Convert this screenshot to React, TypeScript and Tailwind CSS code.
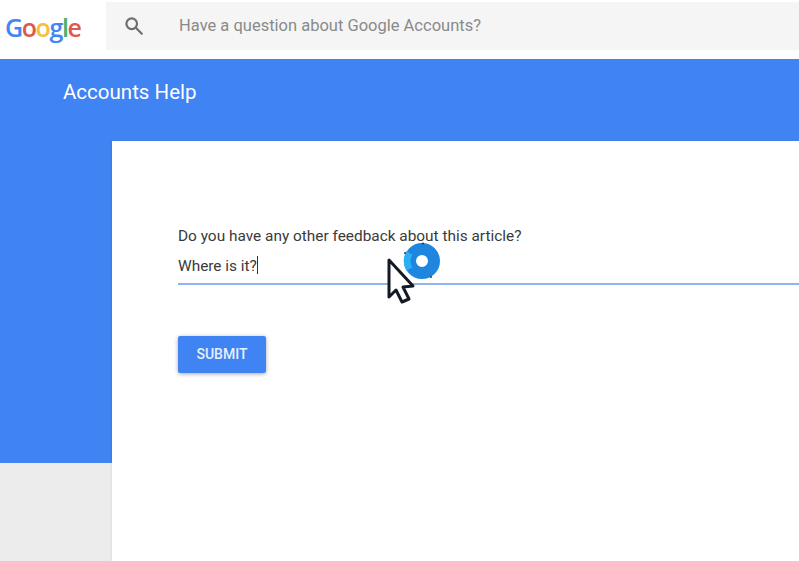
export default function App() {
  return (
    <div className="relative flex h-[561px] w-[799px] flex-col overflow-hidden bg-white font-['Roboto',sans-serif]">
      <header className="flex h-[59px] shrink-0 items-start bg-white">
        <div className="flex h-[54px] w-[106px] items-center pl-[5px] font-['Open_Sans',sans-serif] text-[25px] font-semibold leading-none tracking-[-1.4px]">
          <span className="text-[#4285f4]">G</span>
          <span className="text-[#e0584d]">o</span>
          <span className="text-[#f2c13c]">o</span>
          <span className="text-[#4285f4]">g</span>
          <span className="text-[#4caf6a]">l</span>
          <span className="text-[#e0584d]">e</span>
        </div>
        <div className="mt-[2px] flex h-[48px] flex-1 items-center bg-[#f5f5f5] pl-[17px]">
          <svg viewBox="0 0 24 24" className="h-[22px] w-[22px] text-[#6e6e6e]" fill="none" stroke="currentColor" strokeWidth="2.4">
            <circle cx="9.5" cy="9.5" r="5.8" />
            <path d="M14 14l6.5 6.5" strokeLinecap="round" />
          </svg>
          <span className="ml-[34px] text-[16.5px] text-[#8a8a8a]">Have a question about Google Accounts?</span>
        </div>
      </header>

      <div className="flex h-[82px] shrink-0 items-start bg-[#4083f2] pl-[63px] pt-[20px] text-[20.5px] leading-[26px] text-white">
        Accounts Help
      </div>

      <div className="flex flex-1">
        <div className="flex w-[112px] shrink-0 flex-col bg-[#ececec]">
          <div className="h-[322px] bg-[#4083f2]" />
        </div>
        <main className="flex-1 bg-white pl-[66px] pt-[85px] shadow-[-1px_0_2px_rgba(0,0,0,0.06)]">
          <p className="text-[15.4px] leading-[20px] text-[#3a3a3a]">Do you have any other feedback about this article?</p>
          <div className="mt-[9px] flex h-[28px] items-start text-[15.4px] leading-[22px] text-[#3a3a3a]">
            Where is it?<span className="mt-[1px] h-[18px] w-px bg-[#333333]" />
          </div>
          <div className="h-[2px] bg-[#8fb3f4]" />
          <button className="mt-[51px] h-[37px] w-[88px] rounded-[2px] bg-[#4083f2] text-[14px] font-medium text-[#e8f0fe] shadow-[0_1px_4px_rgba(0,0,0,0.35)]">
            SUBMIT
          </button>
        </main>
      </div>

      <svg viewBox="0 0 60 66" className="absolute left-[384px] top-[240px] h-[66px] w-[60px]" aria-hidden="true">
        <circle cx="38" cy="21" r="12" fill="none" stroke="#1f86e0" strokeWidth="12" />
        <path d="M25.5 13a15 15 0 0 0 0 16" fill="none" stroke="#2bb0f5" strokeWidth="7" />
        <circle cx="21" cy="13" r="1" fill="#1a3a66" />
        <circle cx="39" cy="3.5" r="1" fill="#1a3a66" />
        <circle cx="47" cy="37" r="1" fill="#1a3a66" />
        <path d="M5 20L5 57L12 50L18 62L25 59L19 47L29 46Z" fill="#ffffff" stroke="#141a24" strokeWidth="3" strokeLinejoin="round" />
      </svg>
    </div>
  );
}
